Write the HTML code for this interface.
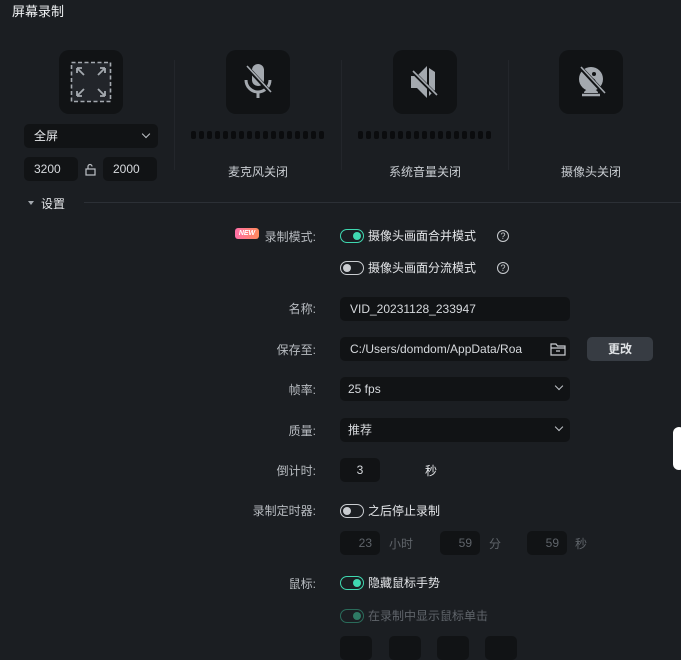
<!DOCTYPE html>
<html><head><meta charset="utf-8"><style>
*{margin:0;padding:0;box-sizing:border-box}
body{width:681px;height:643px;background:#1b1e22;font-family:"Liberation Sans","Noto Sans CJK SC",sans-serif;color:#c9cdd2;font-size:12px;position:relative;overflow:hidden}
.a{position:absolute}
.box{position:absolute;background:#111315;border-radius:10px;width:64px;height:64px}
.in{position:absolute;background:#111315;border-radius:5px;height:24px;line-height:24px;padding-left:10px;color:#d6d9dd;font-size:12px}
.lbl{position:absolute;right:365px;color:#b8bcc1;font-size:12px;text-align:right;white-space:nowrap}
.tg{position:absolute;width:24px;height:14px;border-radius:7px;border:1.5px solid #c9ccd0}
.tg i{position:absolute;top:2px;left:2px;width:8px;height:8px;border-radius:50%;background:#c9ccd0}
.tg.on{border-color:#3fd8b0}.tg.on i{left:12px;background:#3fd8b0}
.txt{position:absolute;font-size:12px;color:#e4e6e9;white-space:nowrap}
.bars{position:absolute;height:8px;display:flex;gap:3px}
.bars b{width:5px;height:8px;border-radius:2px;background:#0b0c0e}
.vd{position:absolute;width:1px;background:#23262b;top:60px;height:110px}
.chev{position:absolute;width:6px;height:6px;border-right:1.3px solid #bfc3c8;border-bottom:1.3px solid #bfc3c8;transform:rotate(45deg)}
.q{position:absolute;width:12px;height:12px;border:1.2px solid #c9ccd0;border-radius:50%;font-size:9px;line-height:10px;text-align:center;color:#c9ccd0}
</style></head><body>
<div class="a" style="left:12px;top:1px;font-size:13px;color:#f0f2f4">屏幕录制</div>

<div class="box" style="left:59px;top:50px"><svg width="64" height="64" viewBox="0 0 64 64"><rect x="12.5" y="12.5" width="39" height="39" fill="#22252a" stroke="#a4a9af" stroke-width="1.6" stroke-dasharray="4 2.5"/><g stroke="#a4a9af" stroke-width="1.8" fill="none"><path d="M18 18l7 7M18 18h5M18 18v5"/><path d="M46 18l-7 7M46 18h-5M46 18v5"/><path d="M18 46l7-7M18 46h5M18 46v-5"/><path d="M46 46l-7-7M46 46h-5M46 46v-5"/></g></svg></div>
<div class="box" style="left:226px;top:50px"><svg width="64" height="64" viewBox="0 0 64 64"><rect x="26" y="14" width="12" height="22" rx="6" fill="#a4a9af"/><path d="M20 30a12 12 0 0 0 24 0" stroke="#a4a9af" stroke-width="3" fill="none"/><path d="M32 42v6" stroke="#a4a9af" stroke-width="3"/><path d="M20 16l24 26" stroke="#111315" stroke-width="4"/><path d="M21 16l24 26" stroke="#a4a9af" stroke-width="1.6"/></svg></div>
<div class="box" style="left:393px;top:50px"><svg width="64" height="64" viewBox="0 0 64 64"><path d="M18 26h6l10-10v32l-10-10h-6z" fill="#a4a9af"/><path d="M36 18l6 4v18l-6 6z" fill="#a4a9af"/><path d="M19 21l24 24" stroke="#111315" stroke-width="4"/><path d="M20 21l24 24" stroke="#a4a9af" stroke-width="1.6"/></svg></div>
<div class="box" style="left:559px;top:50px"><svg width="64" height="64" viewBox="0 0 64 64"><circle cx="32" cy="29" r="12" fill="#a4a9af"/><path d="M23 45h18" stroke="#a4a9af" stroke-width="2.5"/><path d="M25 43a7 4 0 0 1 14 0" fill="#a4a9af"/><circle cx="35" cy="24" r="2" fill="#111315"/><path d="M33 29a4 4 0 0 1 3 5" stroke="#111315" stroke-width="2" fill="none"/><path d="M21 17l24 26" stroke="#111315" stroke-width="4"/><path d="M22 17l24 26" stroke="#a4a9af" stroke-width="1.6"/></svg></div>

<div class="vd" style="left:174px"></div><div class="vd" style="left:341px"></div><div class="vd" style="left:508px"></div>

<div class="in" style="left:24px;top:124px;width:134px;color:#e8eaed">全屏</div><div class="chev" style="left:143px;top:131px"></div>
<div class="in" style="left:24px;top:157px;width:54px;padding-left:10px">3200</div>
<svg class="a" style="left:84px;top:163px" width="13" height="13" viewBox="0 0 13 13"><rect x="2" y="6" width="9" height="6" fill="none" stroke="#bfc3c8" stroke-width="1.2"/><path d="M4 6V3.5a2 2 0 0 1 4 0" fill="none" stroke="#bfc3c8" stroke-width="1.2"/></svg>
<div class="in" style="left:103px;top:157px;width:54px">2000</div>

<div class="bars" style="left:191px;top:131px"><b></b><b></b><b></b><b></b><b></b><b></b><b></b><b></b><b></b><b></b><b></b><b></b><b></b><b></b><b></b><b></b><b></b></div>
<div class="bars" style="left:358px;top:131px"><b></b><b></b><b></b><b></b><b></b><b></b><b></b><b></b><b></b><b></b><b></b><b></b><b></b><b></b><b></b><b></b><b></b></div>
<div class="txt" style="left:228px;top:163px;color:#c9cdd2">麦克风关闭</div>
<div class="txt" style="left:389px;top:163px;color:#c9cdd2">系统音量关闭</div>
<div class="txt" style="left:561px;top:163px;color:#c9cdd2">摄像头关闭</div>

<div class="a" style="left:28px;top:201px;width:0;height:0;border-left:3px solid transparent;border-right:3px solid transparent;border-top:4px solid #a4a9af"></div>
<div class="txt" style="left:41px;top:195px">设置</div>
<div class="a" style="left:84px;top:202px;width:597px;height:1px;background:#2c3036"></div>

<div class="a" style="left:235px;top:228px;width:24px;height:11px;border-radius:3px;background:linear-gradient(90deg,#ff6fa8,#ff8a5b);font-size:7px;font-weight:bold;font-style:italic;color:#fff;text-align:center;line-height:11px">NEW</div>
<div class="lbl" style="top:228px">录制模式:</div>
<div class="tg on" style="left:340px;top:229px"><i></i></div><div class="txt" style="left:368px;top:227px">摄像头画面合并模式</div><div class="q" style="left:497px;top:230px">?</div>
<div class="tg" style="left:340px;top:261px"><i></i></div><div class="txt" style="left:368px;top:259px">摄像头画面分流模式</div><div class="q" style="left:497px;top:262px">?</div>

<div class="lbl" style="top:300px">名称:</div>
<div class="in" style="left:340px;top:297px;width:230px">VID_20231128_233947</div>
<div class="lbl" style="top:341px">保存至:</div>
<div class="in" style="left:340px;top:337px;width:230px;overflow:hidden">C:/Users/domdom/AppData/Roa</div>
<svg class="a" style="left:550px;top:342px" width="16" height="14" viewBox="0 0 16 14"><path d="M1 2h5l1.5 2H15v9H1z" fill="none" stroke="#c9ccd0" stroke-width="1.2"/><path d="M1 6h14M6 9h4" stroke="#c9ccd0" stroke-width="1.2"/></svg>
<div class="a" style="left:587px;top:337px;width:66px;height:24px;border-radius:5px;background:#373c43;color:#e0e3e6;font-weight:bold;text-align:center;line-height:24px">更改</div>
<div class="lbl" style="top:381px">帧率:</div>
<div class="in" style="left:340px;top:377px;width:230px;padding-left:8px">25 fps</div><div class="chev" style="left:556px;top:383px"></div>
<div class="lbl" style="top:422px">质量:</div>
<div class="in" style="left:340px;top:418px;width:230px;padding-left:8px">推荐</div><div class="chev" style="left:556px;top:424px"></div>

<div class="a" style="left:673px;top:427px;width:12px;height:43px;border-radius:6px;background:#fff"></div>

<div class="lbl" style="top:462px">倒计时:</div>
<div class="in" style="left:340px;top:458px;width:40px;padding:0;text-align:center">3</div>
<div class="txt" style="left:425px;top:462px">秒</div>

<div class="lbl" style="top:502px">录制定时器:</div>
<div class="tg" style="left:340px;top:504px"><i></i></div><div class="txt" style="left:368px;top:502px">之后停止录制</div>
<div class="in" style="left:340px;top:531px;width:40px;padding:0 8px 0 0;text-align:right;color:#5f646a">23</div><div class="txt" style="left:389px;top:535px;color:#5f646a">小时</div>
<div class="in" style="left:440px;top:531px;width:40px;padding:0 8px 0 0;text-align:right;color:#5f646a">59</div><div class="txt" style="left:489px;top:535px;color:#5f646a">分</div>
<div class="in" style="left:527px;top:531px;width:40px;padding:0 8px 0 0;text-align:right;color:#5f646a">59</div><div class="txt" style="left:575px;top:535px;color:#5f646a">秒</div>

<div class="lbl" style="top:575px">鼠标:</div>
<div class="tg on" style="left:340px;top:576px"><i></i></div><div class="txt" style="left:368px;top:574px">隐藏鼠标手势</div>
<div class="tg on" style="left:340px;top:609px;border-color:#2a6b5a"><i style="background:#2e7a64"></i></div><div class="txt" style="left:368px;top:607px;color:#5f646a">在录制中显示鼠标单击</div>

<div class="in" style="left:340px;top:636px;width:32px"></div>
<div class="in" style="left:389px;top:636px;width:32px"></div>
<div class="in" style="left:437px;top:636px;width:32px"></div>
<div class="in" style="left:485px;top:636px;width:32px"></div>
</body></html>
